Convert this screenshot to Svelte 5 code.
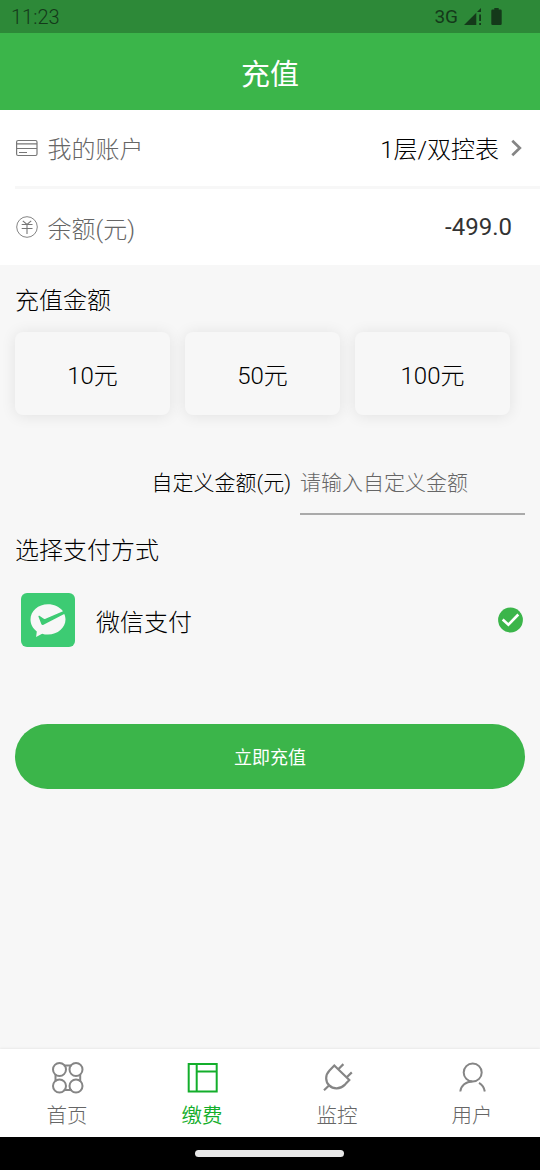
<script>
  const amounts = [10, 50, 100];
  const tabs = [
    { id: 'home', label: '首页' },
    { id: 'pay', label: '缴费' },
    { id: 'monitor', label: '监控' },
    { id: 'user', label: '用户' }
  ];
  let active = $state('pay');
  let custom = $state('');
</script>

<div class="screen">
  <div class="status">
    <span class="time">11:23</span>
    <span class="net">3G</span>
    <svg class="signal" width="18" height="18" viewBox="0 0 18 18">
      <path d="M0 17 12.300 4.700V17Z M13.200 3.800 17 0V4H13.200Z M15.200 6.500h1.800v6.500h-1.800Z M15.200 15h1.800v2h-1.800Z" fill="#14391a" />
    </svg>
    <svg class="battery" width="11" height="18" viewBox="0 0 11 18">
      <path d="M3.3 0h4.4v1.6h1.8q1.2 0 1.2 1.2v13q0 1.2-1.2 1.2h-8q-1.2 0-1.2-1.2v-13q0-1.2 1.2-1.2h1.8Z" fill="#14391a" />
    </svg>
  </div>

  <header>充值</header>

  <section class="account">
    <div class="row">
      <svg width="22" height="18" viewBox="0 0 22 18" fill="none" stroke="#777" stroke-width="1.2">
        <rect x="0.6" y="1.500" width="20.4" height="15" rx="1.5" />
        <path d="M.6 4.800H21M.6 9.500H21M3 13.500h8" />
      </svg>
      <span class="name">我的账户</span>
      <span class="value">1层/双控表</span>
      <svg class="chev" width="12" height="18" viewBox="0 0 12 18" fill="none" stroke="#858585" stroke-width="2.700">
        <path d="M1.300 1.800 8.800 9l-7.500 7.200" />
      </svg>
    </div>
    <div class="divider"></div>
    <div class="row balance">
      <svg width="22" height="22" viewBox="0 0 22 22" fill="none" stroke="#777" stroke-width="1.1">
        <circle cx="11" cy="11" r="10.3" stroke-width=".9" />
        <path d="M6.800 4.800 11 8.500l4.200-3.700M5.700 8.500h10.800M5.700 12.500h10.800M11 8.500V18" />
      </svg>
      <span class="name">余额(元)</span>
      <span class="value">-499.0</span>
    </div>
  </section>

  <h2>充值金额</h2>
  <div class="amounts">
    {#each amounts as amount}
      <button class="amount">{amount}元</button>
    {/each}
  </div>

  <label class="custom">
    <span>自定义金额(元)</span>
    <input bind:value={custom} placeholder="请输入自定义金额" />
  </label>

  <h2>选择支付方式</h2>
  <div class="wechat">
    <svg width="54" height="54" viewBox="0 0 54 54">
      <rect width="54" height="54" rx="6" fill="#3dcb73" />
      <path d="M27 11.3c-9.8 0-17.500 6.800-17.500 15.300 0 5 2.500 9 6.300 11.800l-.7 5.500 6-3.200c1.800.6 3.800.9 5.900.9 9.800 0 17.500-6.800 17.500-15 0-2-.4-4-1.300-5.700L22.500 31.800c-1 .5-1.700.2-2.200-.8l-2.800-7.200c-.3-1 .5-1.400 1.300-.9l3.600 2.700c.7.4 1.400.4 2.100.1L42 18.200C38.300 13.800 33 11.300 27 11.300Z" fill="#f7f7f7" />
    </svg>
    <span>微信支付</span>
    <svg class="check" width="26" height="26" viewBox="0 0 26 26">
      <circle cx="12.500" cy="13" r="12.400" fill="#3bb54a" />
      <path d="m4.700 12.500 5.700 5.200L20.300 7.500" fill="none" stroke="#fff" stroke-width="2.600" />
    </svg>
  </div>

  <button class="submit">立即充值</button>

  <nav>
    {#each tabs as tab}
      <button class="tab" class:active={active === tab.id} onclick={() => (active = tab.id)}>
        <svg width="34" height="34" viewBox="0 0 34 34" fill="none" stroke="currentColor" stroke-width="2">
          {#if tab.id === 'home'}
            <circle cx="9.500" cy="9.500" r="6.500" /><circle cx="26" cy="9.500" r="6.500" />
            <circle cx="9.500" cy="26" r="6.500" /><circle cx="26" cy="26" r="6.500" />
            <path d="M13.700 5.500h8M13.700 30h8M5.500 14.500v7M30.200 14.500v7" />
          {:else if tab.id === 'pay'}
            <path d="M3.700 4h28v27.500h-28ZM11.700 4V31.500M11.700 11.500h20" />
          {:else if tab.id === 'monitor'}
            <path d="M14.300 5.500 29.300 20l-4.300 4.600c-5 5-11.800 4.800-15.800.8s-4.200-10.300.3-15ZM18.800 8.700l4.600-4.600M27 17l4.800-4.600M9.500 25l-5.500 5.300" stroke-width="2.200" />
          {:else}
            <circle cx="17.700" cy="12.500" r="9" />
            <path d="M5.300 31.500c.6-5.800 5.600-10 12-10M24 22.800c3.200 1.800 5.200 4.800 5.800 8.700" />
          {/if}
        </svg>
        <span>{tab.label}</span>
      </button>
    {/each}
  </nav>
  <div class="gesture"><i></i></div>
</div>

<style>
  :global(body) { margin: 0; }
  .screen {
    width: 540px; height: 1170px; box-sizing: border-box; overflow: hidden;
    display: flex; flex-direction: column; background: #f7f7f7; color: #000;
    font-family: Roboto, "Noto Sans CJK SC", sans-serif; font-weight: 300;
  }
  button { border: 0; padding: 0; font: inherit; color: inherit; }
  svg { display: block; flex: none; }
  .status {
    height: 33px; flex: none; display: flex; align-items: center; box-sizing: border-box;
    padding: 0 38px 0 11px; background: #2d8938; color: #14391a; font-size: 20px; font-weight: 400;
  }
  .time { flex: 1; font-weight: 350; padding-top: 1px; }
  .net { font-size: 19px; font-weight: 450; }
  .signal { margin-left: 6px; }
  .battery { margin-left: 9px; }
  header {
    height: 77px; flex: none; line-height: 84px; text-align: center;
    background: #3bb54a; color: #fff; font-size: 29px; font-weight: 400;
  }
  .account { background: #fff; flex: none; }
  .row { height: 76px; display: flex; align-items: center; padding: 0 17px 0 16px; font-size: 24px; }
  .row .name { flex: 1; margin-left: 9.500px; color: #666; padding-bottom: 1px; }
  .row .value { padding-bottom: 1px; }
  .chev { margin-left: 12px; }
  .divider { height: 3px; margin-left: 15px; background: #f7f7f7; }
  .balance { padding-right: 28px; }
  .balance .name { padding-top: 1px; padding-bottom: 0; }
  .balance .value { padding-bottom: 0; font-weight: 400; color: #333; }
  h2 { margin: 18px 0 0 15px; font-size: 24px; line-height: 37px; font-weight: 300; flex: none; }
  .amounts { display: flex; gap: 15px; margin: 12px 15px 0; }
  .amount {
    width: 155px; height: 83px; border-radius: 8px; background: #f7f7f7; font-size: 24px;
    box-shadow: 0 1px 15px rgba(0, 0, 0, .09); padding-bottom: 1px;
  }
  .custom { margin: 36px 15px 0 151.500px; height: 64px; display: flex; font-size: 21px; line-height: 65px; }
  .custom span { width: 148.500px; white-space: nowrap; }
  .custom input {
    width: 225px; height: 64px; box-sizing: border-box; padding: 2px 0 0; border: 0; border-bottom: 2px solid #aaa;
    background: transparent; font: inherit; outline: 0; border-radius: 0;
  }
  .custom input::placeholder { color: #666; opacity: 1; }
  .wechat { margin: 23px 16px 0 21px; height: 54px; display: flex; align-items: center; font-size: 24px; }
  .wechat span { flex: 1; margin-left: 21px; }
  .submit {
    margin: 77px 15px 0; height: 65px; flex: none; border-radius: 33px; background: #3bb54a; color: #fff;
    font-size: 18px; font-weight: 400; padding-bottom: 1px;
  }
  nav {
    margin-top: auto; height: 88px; flex: none; display: flex; background: #fff;
    box-shadow: 0 -1px 2px rgba(0, 0, 0, .06);
  }
  .tab {
    flex: 1; background: transparent; color: #858585; font-size: 20.500px; line-height: 30px;
    display: flex; flex-direction: column; align-items: center; padding: 11px 1px 0 0; gap: 7px;
  }
  .tab span { color: #666; }
  .tab.active, .tab.active span { color: #13ae2b; }
  .tab.active span { font-weight: 350; }
  .gesture { height: 33px; flex: none; background: #000; display: flex; justify-content: center; align-items: center; }
  .gesture i { width: 149px; height: 7px; border-radius: 4px; background: #e8e8e8; margin-right: 1px; }
</style>
